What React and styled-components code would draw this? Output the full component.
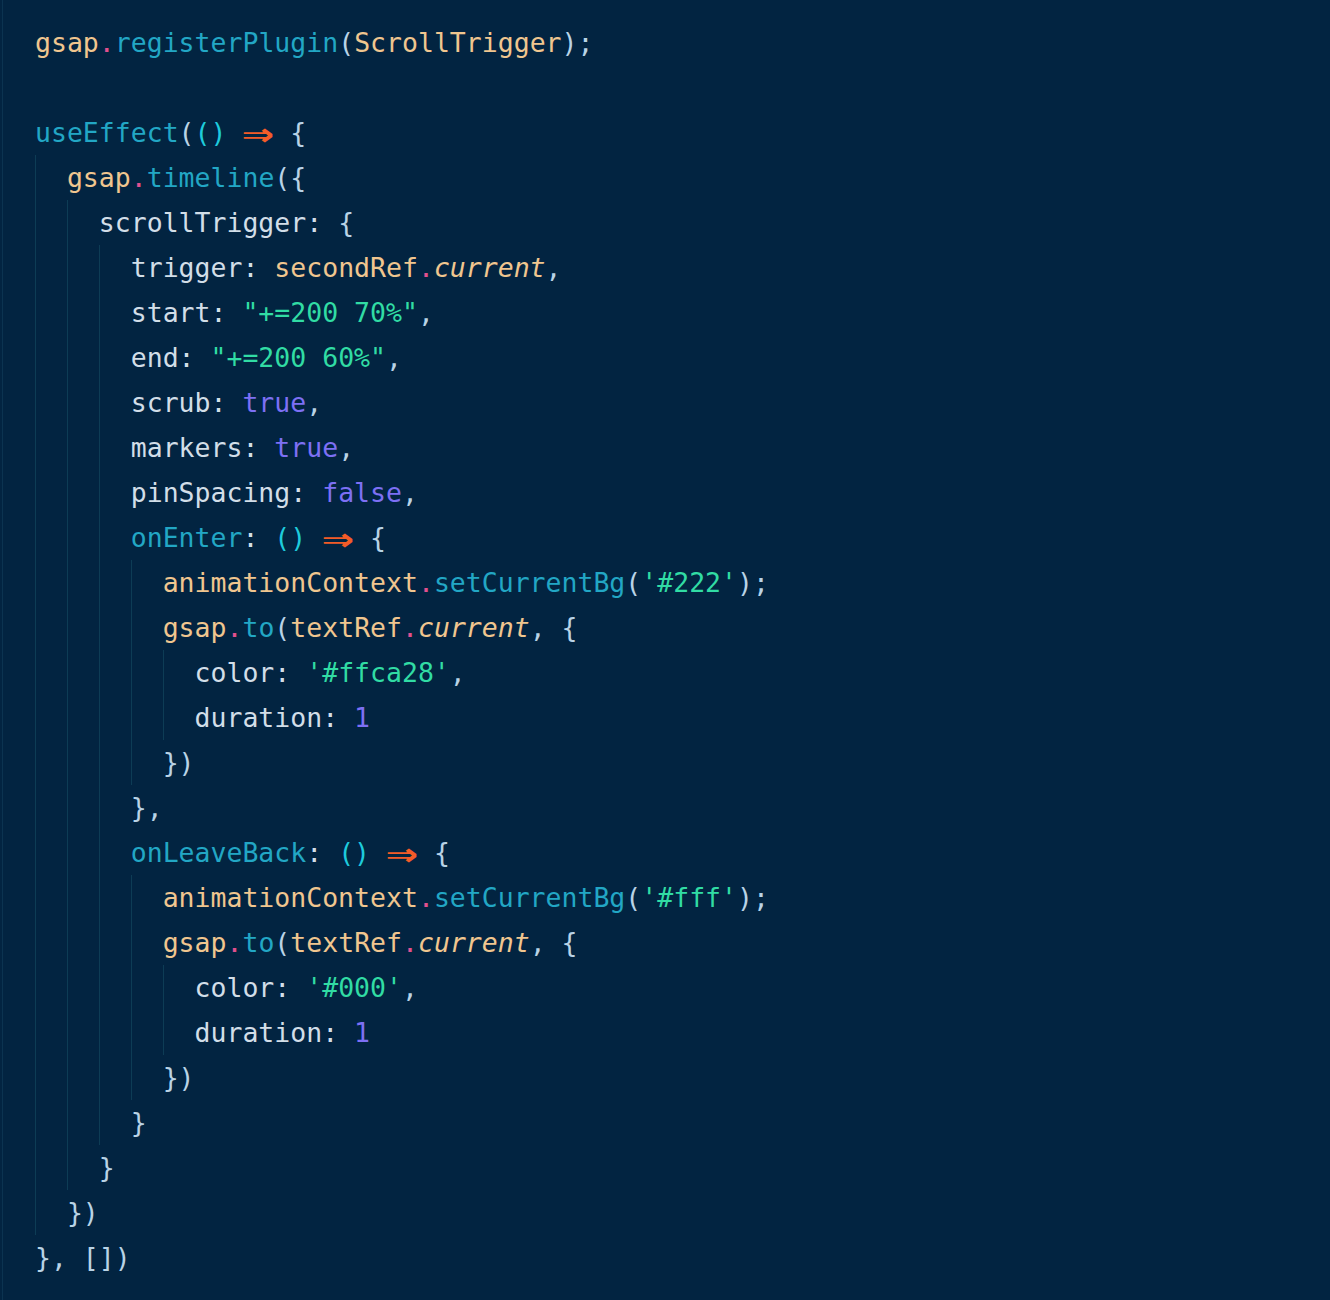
import React from 'react';
import styled, { createGlobalStyle } from 'styled-components';

const GlobalStyle = createGlobalStyle`
	html, body {
		margin: 0;
		padding: 0;
		background: #022441;
	}
`;

const COLORS = {
	plain: '#d2dee8',
	punct: '#b9d3e6',
	obj: '#f0c68f',
	method: '#22a7c5',
	dot: '#e2508e',
	call: '#1ecbdc',
	str: '#31dca4',
	lit: '#7d70f4',
};

const Editor = styled.div`
	box-sizing: border-box;
	min-height: 1300px;
	margin-left: 2px;
	padding: 20px 0 0 32px;
	border-left: 1px solid #0b3350;
	background: #022441;
	font-family: 'DejaVu Sans Mono', 'Liberation Mono', monospace;
	font-size: 26.5px;
	color: ${COLORS.plain};
`;

const Line = styled.div`
	display: flex;
	height: 45px;
	line-height: 45px;
	white-space: pre;
`;

const IndentCell = styled.span`
	box-sizing: border-box;
	flex: none;
	width: 2ch;
	border-left: 1px solid #0d3c55;
`;

const Code = styled.span`
	flex: none;
`;

const Token = styled.span`
	color: ${props => COLORS[props.$kind] || COLORS.plain};
	font-style: ${props => (props.$italic ? 'italic' : 'normal')};
`;

const Arrow = styled.span`
	display: inline-block;
	width: 2ch;
	text-align: center;
	color: #f25c28;
	font-weight: 700;
`;

const ArrowGlyph = styled.span`
	display: inline-block;
	transform: scale(2, 1.45);
`;

const t = (kind, text, italic) => ({ kind, text, italic });
const ARROW = { arrow: true };

const arrowFn = (name) => [
	t('method', name), t('plain', ': '), t('call', '()'), t('plain', ' '), ARROW, t('plain', ' '), t('punct', '{'),
];

const setBg = (value) => [
	t('obj', 'animationContext'), t('dot', '.'), t('method', 'setCurrentBg'), t('punct', '('),
	t('str', `'${value}'`), t('punct', ');'),
];

const gsapTo = [
	t('obj', 'gsap'), t('dot', '.'), t('method', 'to'), t('punct', '('), t('obj', 'textRef'),
	t('dot', '.'), t('obj', 'current', true), t('punct', ', {'),
];

const LINES = [
	[0, [t('obj', 'gsap'), t('dot', '.'), t('method', 'registerPlugin'), t('punct', '('), t('obj', 'ScrollTrigger'), t('punct', ');')]],
	[0, []],
	[0, [t('method', 'useEffect'), t('punct', '('), t('call', '()'), t('plain', ' '), ARROW, t('plain', ' '), t('punct', '{')]],
	[1, [t('obj', 'gsap'), t('dot', '.'), t('method', 'timeline'), t('punct', '({')]],
	[2, [t('plain', 'scrollTrigger: '), t('punct', '{')]],
	[3, [t('plain', 'trigger: '), t('obj', 'secondRef'), t('dot', '.'), t('obj', 'current', true), t('punct', ',')]],
	[3, [t('plain', 'start: '), t('str', '"+=200 70%"'), t('punct', ',')]],
	[3, [t('plain', 'end: '), t('str', '"+=200 60%"'), t('punct', ',')]],
	[3, [t('plain', 'scrub: '), t('lit', 'true'), t('punct', ',')]],
	[3, [t('plain', 'markers: '), t('lit', 'true'), t('punct', ',')]],
	[3, [t('plain', 'pinSpacing: '), t('lit', 'false'), t('punct', ',')]],
	[3, arrowFn('onEnter')],
	[4, setBg('#222')],
	[4, gsapTo],
	[5, [t('plain', 'color: '), t('str', "'#ffca28'"), t('punct', ',')]],
	[5, [t('plain', 'duration: '), t('lit', '1')]],
	[4, [t('punct', '})')]],
	[3, [t('punct', '},')]],
	[3, arrowFn('onLeaveBack')],
	[4, setBg('#fff')],
	[4, gsapTo],
	[5, [t('plain', 'color: '), t('str', "'#000'"), t('punct', ',')]],
	[5, [t('plain', 'duration: '), t('lit', '1')]],
	[4, [t('punct', '})')]],
	[3, [t('punct', '}')]],
	[2, [t('punct', '}')]],
	[1, [t('punct', '})')]],
	[0, [t('punct', '}, [])')]],
];

const CodeLine = ({ indent, tokens }) => (
	<Line>
		{Array.from({ length: indent }).map((_, i) => <IndentCell key={i} />)}
		<Code>
			{tokens.map((tok, i) =>
				tok.arrow
					? <Arrow key={i}><ArrowGlyph>⇒</ArrowGlyph></Arrow>
					: <Token key={i} $kind={tok.kind} $italic={tok.italic}>{tok.text}</Token>
			)}
		</Code>
	</Line>
);

const App = () => (
	<>
		<GlobalStyle />
		<Editor>
			{LINES.map(([indent, tokens], i) => (
				<CodeLine key={i} indent={indent} tokens={tokens} />
			))}
		</Editor>
	</>
);

export default App;
